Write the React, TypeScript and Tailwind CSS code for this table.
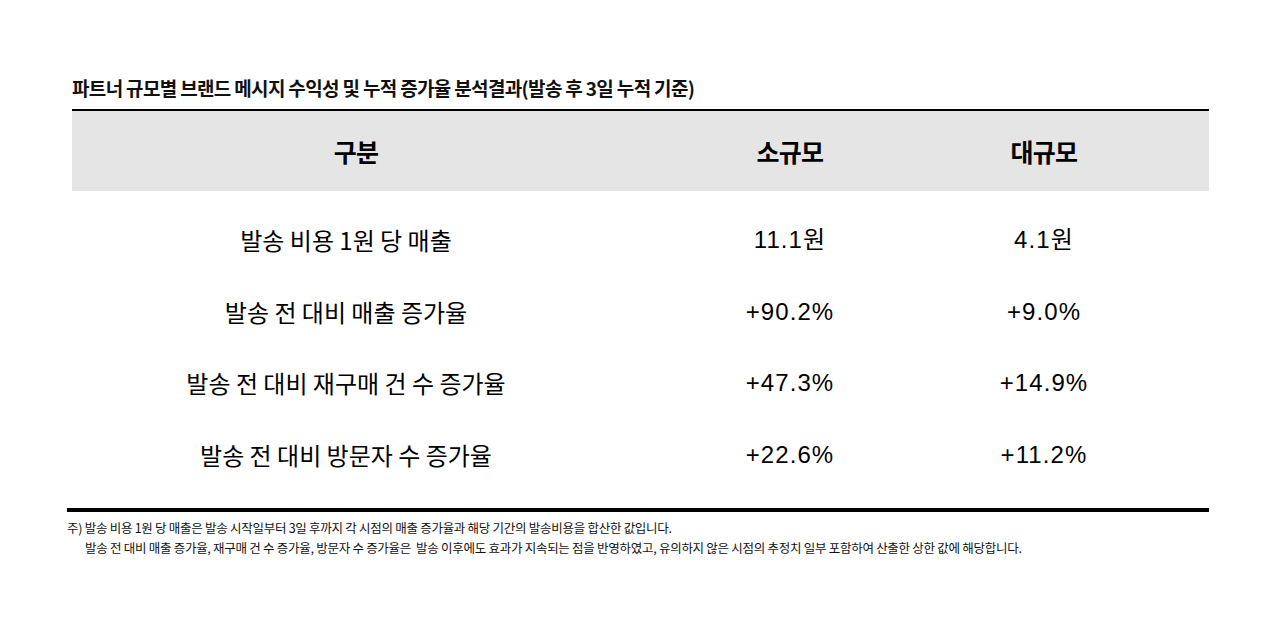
export default function App() {
  const rows = [
    ["발송 비용 1원 당 매출", "11.1원", "4.1원"],
    ["발송 전 대비 매출 증가율", "+90.2%", "+9.0%"],
    ["발송 전 대비 재구매 건 수 증가율", "+47.3%", "+14.9%"],
    ["발송 전 대비 방문자 수 증가율", "+22.6%", "+11.2%"],
  ];
  const kr = { fontFamily: '"Noto Sans CJK KR", "Noto Sans", sans-serif' };
  const num = { fontFamily: '"Liberation Sans", "Noto Sans CJK KR", sans-serif' };
  return (
    <div className="w-[1280px] h-[640px] bg-white text-black" style={kr}>
      <div className="pt-[75px] pl-[72px]">
        <div className="text-[19px] font-bold leading-[25px] tracking-[-0.035em] text-[#111]">
          파트너 규모별 브랜드 메시지 수익성 및 누적 증가율 분석결과(발송 후 3일 누적 기준)
        </div>
      </div>
      <div className="ml-[72px] mt-[9px] w-[1137px] border-t-2 border-black">
        <div className="grid grid-cols-[568px_300px_208px] h-[80px] bg-[#e6e5e6] items-center text-[25px] font-bold tracking-[-0.03em]">
          <div className="text-center pt-[1px]">구분</div>
          <div className="text-center pt-[1px]">소규모</div>
          <div className="text-center pt-[1px]">대규모</div>
        </div>
        <div className="pt-[13px]">
          {rows.map((r) => (
            <div key={r[0]} className="grid grid-cols-[568px_300px_208px] h-[71.7px] items-center text-[24px] font-normal">
              <div className="text-center pr-[20px] tracking-[0em]">{r[0]}</div>
              <div className="text-center tracking-[0.045em]" style={num}>{r[1]}</div>
              <div className="text-center tracking-[0.045em]" style={num}>{r[2]}</div>
            </div>
          ))}
        </div>
      </div>
      <div className="ml-[67px] mt-[17px] w-[1142px] h-[4px] bg-black" />
      <div className="ml-[67px] mt-[6px] text-[12.5px] leading-[20px] tracking-[-0.022em] text-[#111]">
        <div>주) 발송 비용 1원 당 매출은 발송 시작일부터 3일 후까지 각 시점의 매출 증가율과 해당 기간의 발송비용을 합산한 값입니다.</div>
        <div className="pl-[18px]">
          발송 전 대비 매출 증가율, 재구매 건 수 증가율, 방문자 수 증가율은&nbsp; 발송 이후에도 효과가 지속되는 점을 반영하였고, 유의하지 않은 시점의 추정치 일부 포함하여 산출한 상한 값에 해당합니다.
        </div>
      </div>
    </div>
  );
}
